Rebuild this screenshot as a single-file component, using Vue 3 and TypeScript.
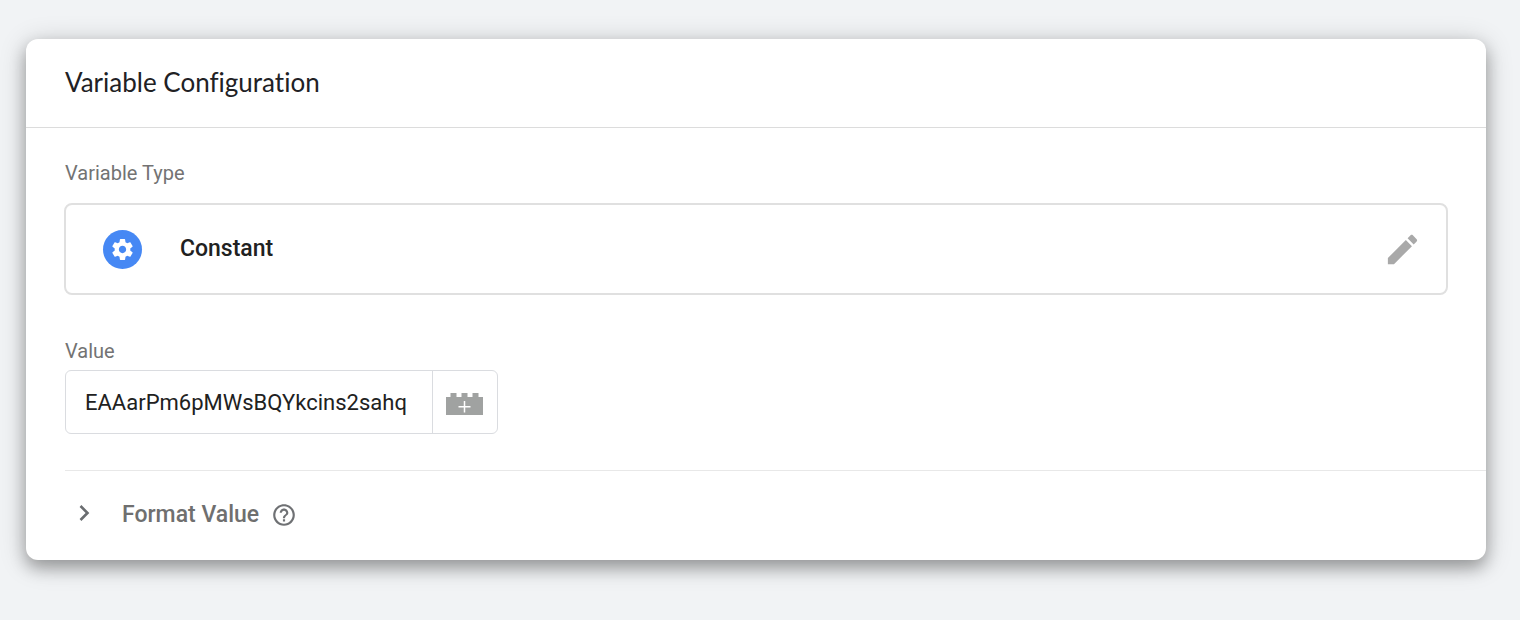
<script setup lang="ts">
import { ref } from 'vue'

const variableType = ref<string>('Constant')
const value = ref<string>('EAAarPm6pMWsBQYkcins2sahq')
</script>

<template>
  <main class="page">
    <section class="card" aria-labelledby="card-title">
      <header class="card-header">
        <h1 id="card-title" class="title">Variable Configuration</h1>
      </header>

      <div class="body">
        <h2 class="label">Variable Type</h2>
        <div class="type-box">
          <span class="type-icon">
            <svg viewBox="0 0 24 24" width="25" height="25" aria-hidden="true">
              <path fill="#fff" d="M19.43 12.98c.04-.32.07-.64.07-.98s-.03-.66-.07-.98l2.11-1.65c.19-.15.24-.42.12-.64l-2-3.46c-.12-.22-.39-.3-.61-.22l-2.49 1c-.52-.4-1.08-.73-1.69-.98l-.38-2.65C14.46 2.18 14.25 2 14 2h-4c-.25 0-.46.18-.49.42l-.38 2.65c-.61.25-1.17.59-1.69.98l-2.49-1c-.23-.09-.49 0-.61.22l-2 3.46c-.13.22-.07.49.12.64l2.11 1.65c-.04.32-.07.65-.07.98s.03.66.07.98l-2.11 1.65c-.19.15-.24.42-.12.64l2 3.46c.12.22.39.3.61.22l2.49-1c.52.4 1.08.73 1.69.98l.38 2.65c.03.24.24.42.49.42h4c.25 0 .46-.18.49-.42l.38-2.65c.61-.25 1.17-.59 1.69-.98l2.49 1c.23.09.49 0 .61-.22l2-3.46c.12-.22.07-.49-.12-.64l-2.11-1.65zM12 15.5c-1.93 0-3.5-1.57-3.5-3.5s1.57-3.5 3.5-3.5 3.5 1.57 3.5 3.5-1.57 3.5-3.5 3.5z" />
            </svg>
          </span>
          <span class="type-name">{{ variableType }}</span>
          <button class="edit" type="button" aria-label="Edit variable type">
            <svg viewBox="0 0 24 24" width="39" height="39" aria-hidden="true">
              <path fill="#a9a9a9" d="M3 17.25V21h3.75L17.81 9.94l-3.75-3.75L3 17.25zM20.71 7.04c.39-.39.39-1.02 0-1.41l-2.34-2.34c-.39-.39-1.02-.39-1.41 0l-1.83 1.83 3.75 3.75 1.83-1.83z" />
            </svg>
          </button>
        </div>

        <label class="label value-label" for="value">Value</label>
        <div class="field">
          <input id="value" v-model="value" class="input" type="text" spellcheck="false" />
          <button class="insert" type="button" aria-label="Insert variable">
            <svg viewBox="0 0 37 22" width="37" height="22" aria-hidden="true">
              <path fill="#a0a2a1" d="M0 4h4.500V0h6v4h5V0h6v4h5V0h6v4H37v18H0z" />
              <path stroke="#fff" stroke-width="1.5" d="M18.500 8v11.500M12.500 13.700h12" />
            </svg>
          </button>
        </div>
      </div>

      <div class="format">
        <button class="expand" type="button" aria-expanded="false">
          <svg class="chevron" viewBox="0 0 12 18" width="12" height="18" aria-hidden="true">
            <path fill="none" stroke="#6a6d70" stroke-width="2.6" d="M1.500 2l7 7-7 7" />
          </svg>
          <span>Format Value</span>
        </button>
        <button class="help" type="button" aria-label="Help">
          <svg viewBox="0 0 24 24" width="26" height="26" aria-hidden="true">
            <path fill="#6f7174" d="M11 18h2v-2h-2v2zm1-16C6.48 2 2 6.48 2 12s4.48 10 10 10 10-4.48 10-10S17.52 2 12 2zm0 18c-4.41 0-8-3.59-8-8s3.59-8 8-8 8 3.59 8 8-3.59 8-8 8zm0-14c-2.21 0-4 1.79-4 4h2c0-1.1.9-2 2-2s2 .9 2 2c0 2-3 1.75-3 5h2c0-2.250 3-2.500 3-5 0-2.210-1.790-4-4-4z" />
          </svg>
        </button>
      </div>
    </section>
  </main>
</template>

<style>
body {
  margin: 0;
  background: #f1f3f5;
}
</style>

<style scoped>
.page {
  padding: 39px 34px 60px 26px;
  font-family: Roboto, "Liberation Sans", sans-serif;
  color: #212121;
}
.card {
  background: #fff;
  border-radius: 12px;
  box-shadow: 0 8px 16px rgba(0, 0, 0, 0.28), 0 4px 28px rgba(0, 0, 0, 0.2);
}
.card-header {
  padding: 26px 39px 28px;
  border-bottom: 1px solid #dcdcdc;
}
.title {
  margin: 0;
  font: 400 26px/34px Lato, Roboto, sans-serif;
  font-variant-ligatures: none;
  color: #212124;
}
.body {
  padding: 33px 39px 36px;
}
.label {
  display: block;
  margin: 0;
  font-size: 20px;
  font-weight: 400;
  line-height: 24px;
  color: #737373;
}
.type-box {
  display: flex;
  align-items: center;
  height: 88px;
  margin: 18px -1px 0;
  padding: 0 24px 0 37px;
  border: 2px solid #e0e0e0;
  border-radius: 8px;
}
.type-icon {
  display: flex;
  align-items: center;
  justify-content: center;
  width: 39px;
  height: 39px;
  border-radius: 50%;
  background: #4688f4;
}
.type-name {
  flex: 1;
  margin-left: 38px;
  font-size: 23px;
  font-weight: 500;
  line-height: 28px;
}
button {
  display: flex;
  align-items: center;
  margin: 0;
  padding: 0;
  border: 0;
  background: none;
  font: inherit;
  color: inherit;
  cursor: pointer;
}
.value-label {
  margin-top: 44px;
}
.field {
  display: flex;
  width: 431px;
  height: 62px;
  margin-top: 7px;
  border: 1px solid #dadce0;
  border-radius: 6px;
}
.input {
  flex: 1;
  min-width: 0;
  padding: 2px 16px 0 19px;
  border: 0;
  outline: 0;
  background: none;
  font: 400 22px/28px Roboto, "Liberation Sans", sans-serif;
  color: #212121;
}
.insert {
  justify-content: center;
  width: 65px;
  padding: 4px 1px 0 0;
  border-left: 1px solid #dadce0;
}
.format {
  display: flex;
  align-items: center;
  gap: 12px;
  margin-left: 39px;
  padding: 30px 0 31px;
  border-top: 1px solid #e8e8e8;
}
.expand {
  gap: 31px;
  padding-left: 14px;
  font-size: 23px;
  font-weight: 500;
  line-height: 28px;
  color: #6f6f6f;
}
.chevron {
  margin-bottom: 5px;
}
</style>
